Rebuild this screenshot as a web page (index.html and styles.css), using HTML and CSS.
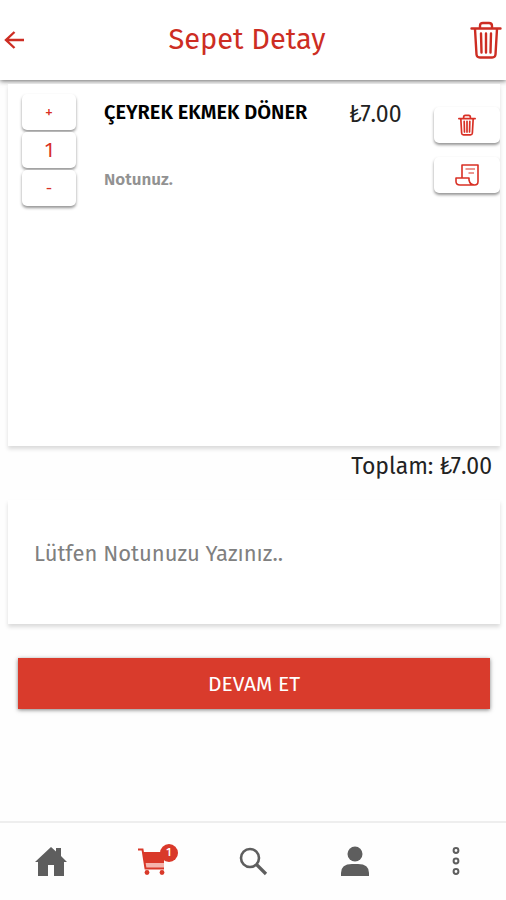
FILE: index.html
```html
<!DOCTYPE html>
<html lang="tr">
<head>
<meta charset="utf-8">
<meta name="viewport" content="width=device-width, initial-scale=1">
<title>Sepet Detay</title>
<link rel="stylesheet" href="styles.css">
</head>
<body>
<svg class="defs" aria-hidden="true">
  <symbol id="trash" viewBox="0 0 32 38">
    <g fill="none" stroke="currentColor" stroke-linecap="round" stroke-linejoin="round">
      <path d="M1.500 7.500H30.500M10 7V5Q10 2 13 2H19Q22 2 22 5V7M5 8L6.500 33.500Q6.800 36.500 9.800 36.500H22.200Q25.200 36.500 25.500 33.500L27 8"/>
      <path d="M11 12.500L11.500 31.500M16 12.500V31.500M21 12.500L20.500 31.500"/>
    </g>
  </symbol>
</svg>
<header class="topbar">
  <button class="icon-button" type="button" aria-label="Geri">
    <svg class="back" viewBox="0 0 20 20"><path d="M10.500 2L2 10L10.500 18M2 10H20" fill="none" stroke="currentColor" stroke-width="2.400"/></svg>
  </button>
  <h1 class="title">Sepet Detay</h1>
  <button class="icon-button" type="button" aria-label="Sepeti boşalt">
    <svg class="trash-large"><use href="#trash"/></svg>
  </button>
</header>
<main class="content">
  <section class="card cart">
    <article class="item">
      <div class="stepper">
        <button class="raised" type="button">+</button>
        <output class="raised count">1</output>
        <button class="raised" type="button">-</button>
      </div>
      <div class="details">
        <h2 class="name">ÇEYREK EKMEK DÖNER</h2>
        <p class="item-note">Notunuz.</p>
      </div>
      <p class="price">₺7.00</p>
      <div class="actions">
        <button class="raised action" type="button" aria-label="Ürünü sil">
          <svg class="trash-small"><use href="#trash"/></svg>
        </button>
        <button class="raised action" type="button" aria-label="Ürün notu">
          <svg class="scroll" viewBox="0 0 24 22"><g fill="none" stroke="currentColor" stroke-width="1.600" stroke-linejoin="round"><path d="M7 14V1H23V17.500Q23 21 19.500 21H5Q1 21 1 17.500V14H14V16Q15 21 19.500 21"/><path d="M10.500 5H20M13.500 9H19" stroke-width="1.200"/></g></svg>
        </button>
      </div>
    </article>
  </section>
  <p class="total">Toplam: ₺7.00</p>
  <textarea class="card note" aria-label="Sipariş notu" placeholder="Lütfen Notunuzu Yazınız.."></textarea>
  <button class="continue" type="button">DEVAM ET</button>
</main>
<nav class="tabs">
  <a class="tab" href="#home" aria-label="Ana sayfa">
    <svg class="tab-icon" viewBox="0 0 40 32"><path d="M4 16L20 1L25 5.500V2H30V10L36 16H33V30H23V19H17V30H7V16Z" fill="currentColor"/></svg>
  </a>
  <a class="tab active" href="#cart" aria-label="Sepet">
    <svg class="tab-icon" viewBox="0 0 40 32"><path d="M12 17H32V22H13Z" fill="#f5b5ae"/><path d="M6 3.500H10.500L13.500 22.500H32" fill="none" stroke="currentColor" stroke-width="2"/><path d="M11 6H32V17H12.500Z" fill="currentColor"/><circle cx="15" cy="26.500" r="2.400" fill="currentColor"/><circle cx="30" cy="26.500" r="2.400" fill="currentColor"/></svg>
    <span class="badge">1</span>
  </a>
  <a class="tab" href="#search" aria-label="Ara">
    <svg class="tab-icon" viewBox="0 0 40 32"><g fill="none" stroke="currentColor" stroke-width="2.600"><circle cx="17" cy="12" r="9"/><path d="M23.500 18.500L33 28" stroke-width="3.200"/></g></svg>
  </a>
  <a class="tab" href="#profile" aria-label="Profil">
    <svg class="tab-icon" viewBox="0 0 40 32"><g fill="currentColor"><circle cx="21" cy="8" r="7.500"/><path d="M7 30V27Q7 18 18 18H24Q35 18 35 27V30Z"/></g></svg>
  </a>
  <a class="tab" href="#more" aria-label="Daha fazla">
    <svg class="tab-icon" viewBox="0 0 40 32"><g fill="none" stroke="currentColor" stroke-width="2"><circle cx="21" cy="4.500" r="2.400"/><circle cx="21" cy="15" r="2.400"/><circle cx="21" cy="25.500" r="2.400"/></g></svg>
  </a>
</nav>
</body>
</html>
```
FILE: styles.css
```css
* { box-sizing: border-box; }

body {
  margin: 0;
  min-height: 100vh;
  display: flex;
  flex-direction: column;
  background: #fefefe;
  color: #222;
  font-family: "Fira Sans", "Noto Sans", sans-serif;
}

h1, h2, p { margin: 0; font-weight: 400; }
button { font: inherit; border: 0; padding: 0; cursor: pointer; }
svg { display: block; }
.defs { position: absolute; width: 0; height: 0; }

.topbar {
  display: flex;
  align-items: center;
  justify-content: space-between;
  height: 80px;
  padding: 0 4px;
  background: #fff;
  color: #cd2d23;
  box-shadow: 0 1px 5px rgba(0, 0, 0, 0.6);
}

.icon-button {
  display: flex;
  background: none;
  color: inherit;
}

.title { font-size: 29px; line-height: 42px; }
.back { width: 20px; height: 20px; }
.trash-large { width: 32px; height: 38px; stroke-width: 2.4; }

.content {
  flex: 1;
  display: flex;
  flex-direction: column;
  padding: 4px 6px 0 8px;
}

.card {
  background: #fff;
  box-shadow: 0 3px 4px rgba(0, 0, 0, 0.14);
}

.cart { min-height: 362px; overflow: hidden; }

.item {
  display: grid;
  grid-template-columns: 54px 1fr 83px 68px;
  padding: 10px 0 0 14px;
}

.stepper { display: flex; flex-direction: column; gap: 2px; }

.raised {
  display: flex;
  align-items: center;
  justify-content: center;
  height: 36px;
  border-radius: 5px;
  background: #fff;
  color: #d93025;
  font-size: 16px;
  box-shadow: 0 2px 3px rgba(0, 0, 0, 0.42);
}

.count { font-size: 20px; }

.details { padding-left: 28px; }

.name {
  color: #000;
  font-size: 20px;
  font-weight: 600;
  line-height: 36px;
}

.item-note {
  margin-top: 32px;
  color: #929292;
  font-size: 17px;
  font-weight: 600;
  line-height: 36px;
}

.price { font-size: 23px; line-height: 40px; }

.actions {
  display: flex;
  flex-direction: column;
  gap: 14px;
  padding-top: 13px;
}

.actions .raised { margin-left: 2px; }
.action { border-radius: 5px; }
.trash-small { width: 18px; height: 22px; stroke-width: 3; }
.scroll { width: 24px; height: 22px; }

.total {
  padding: 0 8px;
  font-size: 23px;
  line-height: 40px;
  text-align: right;
}

.note {
  display: block;
  width: 100%;
  height: 124px;
  margin-top: 14px;
  padding: 38px 26px;
  border: 0;
  border-radius: 0;
  resize: none;
  font-family: inherit;
  font-size: 22px;
  line-height: 32px;
}

.note::placeholder { color: #808080; opacity: 1; }

.continue {
  height: 51px;
  margin: 34px 10px 0;
  background: #d93b2c;
  color: #fff;
  font-size: 21px;
  box-shadow: 0 1px 4px rgba(0, 0, 0, 0.5);
}

.tabs {
  display: flex;
  height: 79px;
  border-top: 2px solid #eee;
}

.tab {
  position: relative;
  flex: 1;
  display: flex;
  align-items: center;
  justify-content: center;
  color: #5e5e5e;
}

.active { color: #d9392a; }
.tab-icon { width: 40px; height: 32px; }

.badge {
  position: absolute;
  top: 21px;
  left: calc(50% + 8px);
  width: 18px;
  height: 18px;
  border-radius: 50%;
  background: #d9392a;
  color: #fff;
  font-size: 11px;
  font-weight: 500;
  line-height: 18px;
  text-align: center;
}
```
